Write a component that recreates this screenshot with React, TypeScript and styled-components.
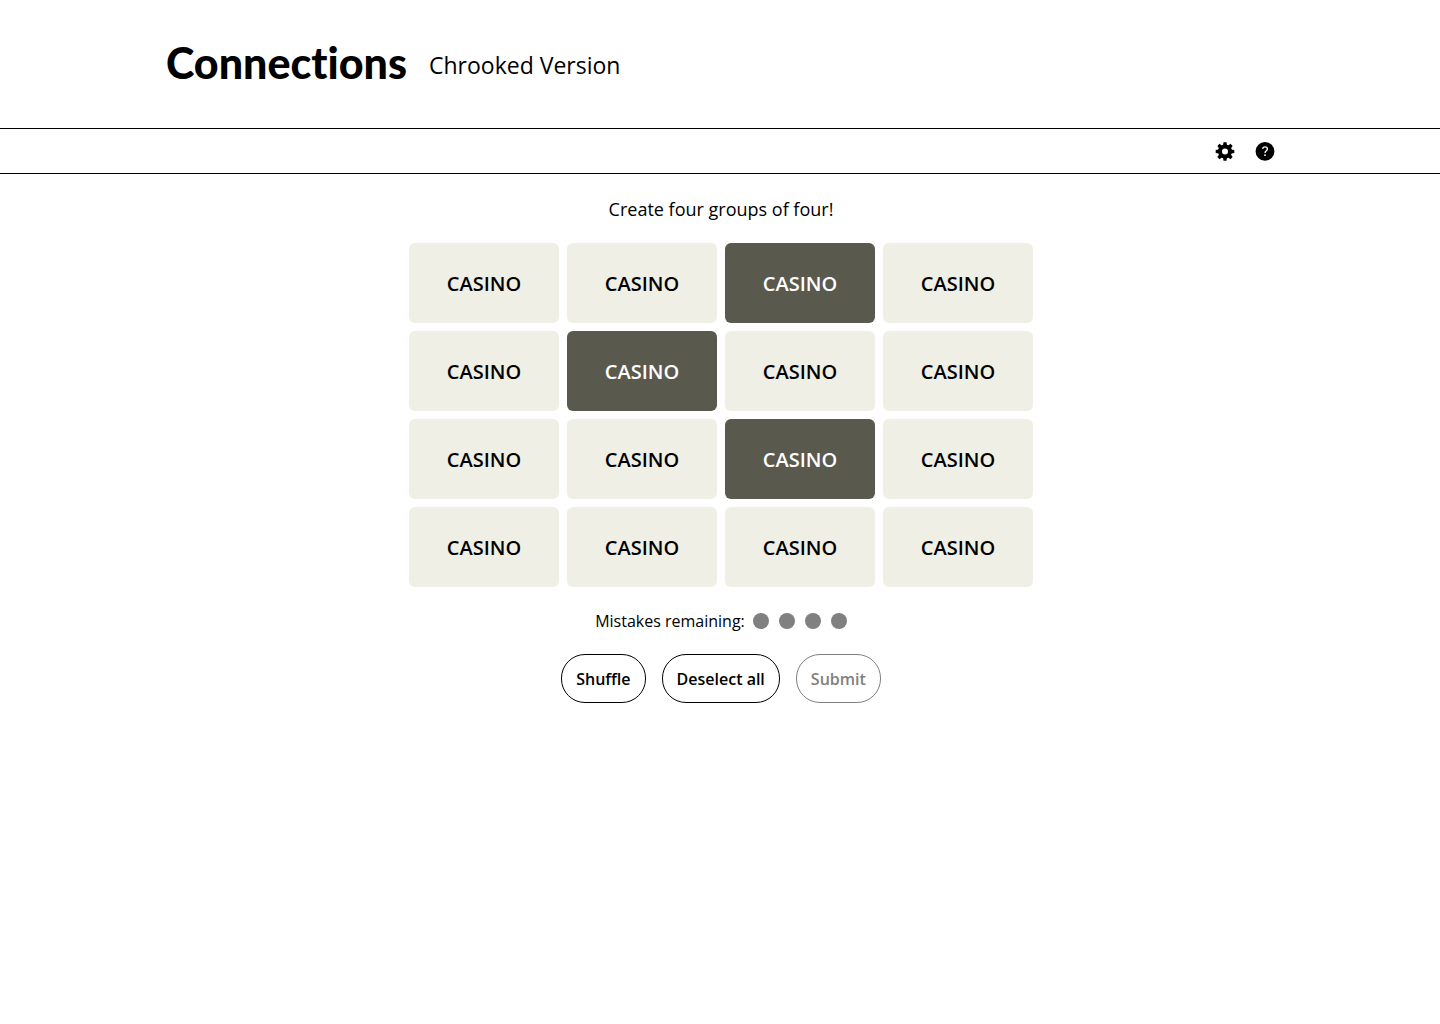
import React, { useState } from "react";
import styled, { createGlobalStyle } from "styled-components";

const GlobalStyle = createGlobalStyle`
  *, *::before, *::after { box-sizing: border-box; }
  body {
    margin: 0;
    background: #fff;
    color: #000;
    font-family: "Open Sans", "Noto Sans", sans-serif;
  }
`;

const Header = styled.header`
  display: flex;
  align-items: center;
  gap: 22px;
  height: 128px;
  padding: 0 166px 2px;
`;

const Title = styled.h1`
  margin: 0;
  font-family: Lato, sans-serif;
  font-size: 43px;
  line-height: 64px;
  font-weight: 900;
  font-variant-ligatures: none;
`;

const Subtitle = styled.p`
  margin: 0;
  padding-top: 4px;
  font-size: 23px;
  line-height: 32px;
`;

const Toolbar = styled.nav`
  display: flex;
  justify-content: flex-end;
  align-items: center;
  gap: 20px;
  height: 46px;
  padding: 0 165px;
  border-top: 1px solid #000;
  border-bottom: 1px solid #000;
`;

const IconButton = styled.button`
  display: flex;
  padding: 0;
  border: 0;
  background: none;
  color: #000;
  cursor: pointer;
`;

const Main = styled.main`
  display: flex;
  flex-direction: column;
  align-items: center;
  padding: 23px 16px 24px 18px;
`;

const Prompt = styled.p`
  margin: 0 0 22px;
  font-size: 18px;
  line-height: 24px;
`;

const Board = styled.div`
  display: grid;
  grid-template-columns: repeat(4, 1fr);
  gap: 8px;
  width: 100%;
  max-width: 624px;
`;

const Tile = styled.button<{ $selected: boolean }>`
  height: 80px;
  padding: 2px 0 0;
  border: 0;
  border-radius: 6px;
  background: ${(p) => (p.$selected ? "#5a594e" : "#efefe6")};
  color: ${(p) => (p.$selected ? "#fff" : "#000")};
  font-family: inherit;
  font-size: 20px;
  line-height: 24px;
  font-weight: 600;
  cursor: pointer;
`;

const Mistakes = styled.div`
  display: flex;
  align-items: center;
  gap: 8px;
  margin: 22px 0 21px;
  font-size: 16px;
  line-height: 24px;
`;

const Dots = styled.div`
  display: flex;
  gap: 10px;
`;

const Dot = styled.span`
  width: 16px;
  height: 16px;
  border-radius: 50%;
  background: #808080;
`;

const Actions = styled.div`
  display: flex;
  gap: 16px;
`;

const ActionButton = styled.button`
  height: 49px;
  padding: 0 14px;
  border: 1px solid #000;
  border-radius: 24px;
  background: #fff;
  color: #000;
  font-family: inherit;
  font-size: 16px;
  line-height: 24px;
  font-weight: 600;
  white-space: nowrap;
  cursor: pointer;

  &:disabled {
    border-color: #808080;
    color: #808080;
    cursor: default;
  }
`;

const GearIcon = () => (
  <svg width="20" height="20" viewBox="0 0 20 20" fill="none" aria-hidden="true">
    <circle cx="10" cy="10.5" r="5" stroke="currentColor" strokeWidth="4" />
    {[0, 45, 90, 135, 180, 225, 270, 315].map((angle) => (
      <path
        key={angle}
        d="M8 4.5 L8.5 1.2 H11.5 L12 4.5 Z"
        fill="currentColor"
        transform={`rotate(${angle} 10 10.5)`}
      />
    ))}
  </svg>
);

const HelpIcon = () => (
  <svg width="20" height="20" viewBox="0 0 20 20" fill="none" aria-hidden="true">
    <circle cx="10" cy="10.4" r="9.4" fill="currentColor" />
    <path
      d="M7.7 7.9 C7.8 6.5 8.7 5.8 10 5.8 C11.4 5.8 12.4 6.6 12.4 7.9 C12.4 9.7 10 9.8 10 12"
      stroke="#fff"
      strokeWidth="1.3"
    />
    <circle cx="10" cy="14.2" r="0.9" fill="#fff" />
  </svg>
);

const WORDS = Array.from({ length: 16 }, () => "CASINO");

export default function App() {
  const [selected, setSelected] = useState<number[]>([2, 5, 10]);

  const toggle = (index: number) =>
    setSelected((current) =>
      current.includes(index)
        ? current.filter((i) => i !== index)
        : current.length < 4
          ? [...current, index]
          : current
    );

  return (
    <>
      <GlobalStyle />
      <Header>
        <Title>Connections</Title>
        <Subtitle>Chrooked Version</Subtitle>
      </Header>
      <Toolbar>
        <IconButton type="button" aria-label="Settings">
          <GearIcon />
        </IconButton>
        <IconButton type="button" aria-label="Help">
          <HelpIcon />
        </IconButton>
      </Toolbar>
      <Main>
        <Prompt>Create four groups of four!</Prompt>
        <Board>
          {WORDS.map((word, index) => (
            <Tile
              key={index}
              type="button"
              $selected={selected.includes(index)}
              aria-pressed={selected.includes(index)}
              onClick={() => toggle(index)}
            >
              {word}
            </Tile>
          ))}
        </Board>
        <Mistakes>
          <span>Mistakes remaining:</span>
          <Dots>
            {[0, 1, 2, 3].map((dot) => (
              <Dot key={dot} />
            ))}
          </Dots>
        </Mistakes>
        <Actions>
          <ActionButton type="button">Shuffle</ActionButton>
          <ActionButton type="button" onClick={() => setSelected([])}>
            Deselect all
          </ActionButton>
          <ActionButton type="button" disabled={selected.length < 4}>
            Submit
          </ActionButton>
        </Actions>
      </Main>
    </>
  );
}
